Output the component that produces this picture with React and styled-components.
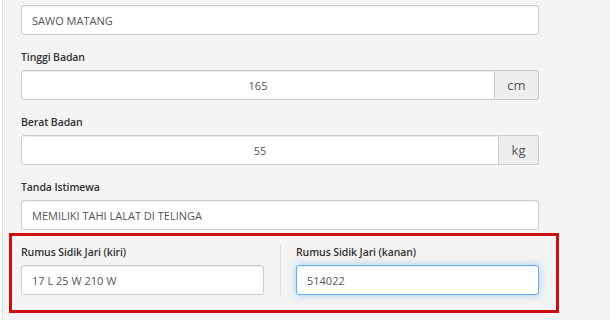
import React from "react";
import styled, { createGlobalStyle, css } from "styled-components";

const Global = createGlobalStyle`
  html, body { margin: 0; padding: 0; background: #ffffff; }
  body { font-family: "Open Sans", "Noto Sans", sans-serif; }
  * { box-sizing: border-box; }
`;

const Page = styled.div`
  margin-left: 2px;
  height: 320px;
  background: #f4f4f4;
  border-left: 1px solid #dcdcdc;
  padding: 5px 0 0 18px;
  overflow: hidden;
`;

const Form = styled.div`
  width: 518px;
  display: flex;
  flex-direction: column;
`;

const Group = styled.div`
  display: flex;
  flex-direction: column;
  margin-top: ${(p) => (p.$first ? 0 : 14)}px;
`;

const Label = styled.label`
  font-size: 10.5px;
  font-weight: 600;
  color: #333;
  line-height: 16px;
  height: 16px;
  margin-bottom: 5px;
  letter-spacing: -0.1px;
`;

const Input = styled.input`
  display: block;
  width: 100%;
  min-width: 0;
  flex: 0 0 30px;
  height: 30px;
  padding: 0 10px;
  font-family: "Open Sans", "Noto Sans", sans-serif;
  font-size: 11px;
  color: #555;
  background: #fff;
  border: 1px solid #cccccc;
  border-radius: 3px;
  box-shadow: inset 0 1px 1px rgba(0, 0, 0, 0.075);
  outline: none;
  text-align: ${(p) => (p.$center ? "center" : "left")};
  ${(p) =>
    p.$addon &&
    css`
      border-top-right-radius: 0;
      border-bottom-right-radius: 0;
    `}
  ${(p) =>
    p.$focused &&
    css`
      border-color: #66afe9;
      box-shadow: inset 0 1px 1px rgba(0, 0, 0, 0.075),
        0 0 8px rgba(102, 175, 233, 0.6);
    `}
`;

const InputGroup = styled.div`
  display: flex;
  height: 30px;
  & > ${Input} {
    flex: 1 1 auto;
  }
`;

const Addon = styled.span`
  flex: 0 0 ${(p) => p.$w}px;
  height: 30px;
  display: flex;
  align-items: center;
  justify-content: center;
  background: #eeeeee;
  border: 1px solid #cccccc;
  border-left: none;
  border-radius: 0 3px 3px 0;
  font-size: 13px;
  color: #555;
`;

const Highlight = styled.div`
  margin: 3px 0 0 -12px;
  width: 550px;
  border: 3px solid #cc0e0e;
  padding: 8px 17px 15px 9px;
  display: flex;
`;

const Col = styled.div`
  flex: 1;
  display: flex;
  flex-direction: column;
`;

const Divider = styled.div`
  width: 1px;
  background: #dddddd;
  margin: 1px 15px 0 16px;
`;

export default function App() {
  return (
    <>
      <Global />
      <Page>
        <Form>
          <Group $first>
            <Input readOnly value="SAWO MATANG" />
          </Group>
          <Group>
            <Label>Tinggi Badan</Label>
            <InputGroup>
              <Input readOnly $center $addon value="165" />
              <Addon $w={44}>cm</Addon>
            </InputGroup>
          </Group>
          <Group>
            <Label>Berat Badan</Label>
            <InputGroup>
              <Input readOnly $center $addon value="55" />
              <Addon $w={40}>kg</Addon>
            </InputGroup>
          </Group>
          <Group>
            <Label>Tanda Istimewa</Label>
            <Input readOnly value="MEMILIKI TAHI LALAT DI TELINGA" />
          </Group>
          <Highlight>
            <Col>
              <Label>Rumus Sidik Jari (kiri)</Label>
              <Input readOnly value="17 L 25 W 210 W" />
            </Col>
            <Divider />
            <Col>
              <Label>Rumus Sidik Jari (kanan)</Label>
              <Input readOnly $focused value="514022" />
            </Col>
          </Highlight>
        </Form>
      </Page>
    </>
  );
}
